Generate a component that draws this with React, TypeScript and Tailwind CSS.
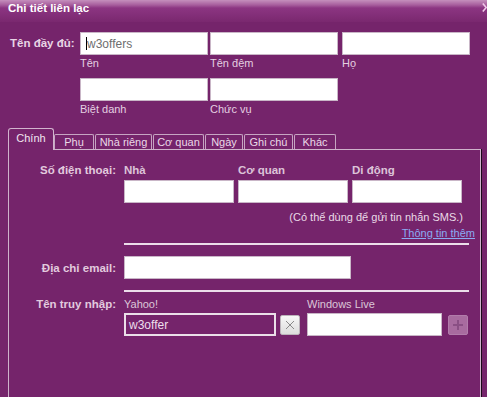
const field = 'h-[23px] bg-white border border-[#c9b6c7]';

function NameField({ label, value, className = '' }: { label: string; value?: string; className?: string }) {
  return (
    <div className={`w-[128px] ${className}`}>
      <div className={`${field} flex items-center pl-[5px]`}>
        {value && (
          <>
            <span className="w-px h-[13px] bg-black" />
            <span className="text-[#6e6e6e] text-[12px]">{value}</span>
          </>
        )}
      </div>
      <div className="mt-[1px] leading-[15px] text-[#e4cfe1]">{label}</div>
    </div>
  );
}

function Tab({ label, width, active = false, first = false }: { label: string; width: string; active?: boolean; first?: boolean }) {
  if (active) {
    return (
      <div
        className={`${width} h-[22px] border border-b-0 border-[#d2b4ce] rounded-t-[3px] bg-[#75246b] pt-[2px] text-center text-[#f2e4f0]`}
      >
        {label}
      </div>
    );
  }
  return (
    <div
      className={`${width} ${first ? '' : 'ml-[1px]'} mb-[1px] h-[15px] border border-b-0 border-[#c6a5c2] rounded-t-[2px] text-center leading-[14px] text-[#ead8e7]`}
    >
      {label}
    </div>
  );
}

export default function App() {
  return (
    <div className="w-[487px] h-[397px] overflow-hidden flex flex-col bg-[#75246b] font-['Liberation_Sans',Arial,sans-serif] text-[11px] leading-[14px] text-[#e2cade]">
      {/* title bar */}
      <div className="h-[22px] shrink-0 flex items-start bg-[linear-gradient(to_bottom,#c58fbd_0px,#a75d9d_5px,#8c3582_8px,#7a286f_22px)]">
        <span className="pl-[8px] pt-[1px] font-bold text-[11.5px] text-white">Chi tiết liên lạc</span>
        <svg className="ml-auto mt-[3px]" width="5" height="9" viewBox="0 0 5 9">
          <path d="M0.8 0.5 L4.2 4.5 L0.8 8.5" stroke="#f0c6e8" strokeWidth="1.6" fill="none" />
        </svg>
      </div>

      {/* full name */}
      <div className="mt-[10px] flex pl-[10px] shrink-0">
        <div className="w-[70px] font-bold text-[11.5px] leading-[23px] text-[#e8d4e5]">Tên đầy đủ:</div>
        <div className="flex flex-col gap-y-[7px]">
          <div className="flex">
            <NameField label="Tên" value="w3offers" />
            <NameField label="Tên đệm" className="ml-[2px]" />
            <NameField label="Họ" className="ml-[4px]" />
          </div>
          <div className="flex">
            <NameField label="Biệt danh" />
            <NameField label="Chức vụ" className="ml-[2px]" />
          </div>
        </div>
      </div>

      {/* tabs */}
      <div className="mt-[11px] -mb-px h-[22px] flex items-end pl-[8px] relative z-10 shrink-0">
        <Tab label="Chính" width="w-[46px]" active />
        <Tab label="Phụ" width="w-[40px]" first />
        <Tab label="Nhà riêng" width="w-[57px]" />
        <Tab label="Cơ quan" width="w-[51px]" />
        <Tab label="Ngày" width="w-[38px]" />
        <Tab label="Ghi chú" width="w-[49px]" />
        <Tab label="Khác" width="w-[42px]" />
      </div>

      {/* panel */}
      <div className="flex-1 ml-[8px] w-[473px] border-l border-t border-r border-[#cfb2cb] shadow-[1px_0_0_#1c0819]">
        <div className="flex pt-[13px]">
          <div className="w-[107px] text-right font-bold text-[11.5px]">Số điện thoại:</div>
          <div className="ml-[8px] w-[351px]">
            <div className="flex font-bold text-[11.5px] text-[#dcc3d8]">
              <span className="w-[114px]">Nhà</span>
              <span className="w-[114px]">Cơ quan</span>
              <span>Di động</span>
            </div>
            <div className="mt-[3px] flex gap-[4px]">
              <div className={`${field} w-[110px]`} />
              <div className={`${field} w-[110px]`} />
              <div className={`${field} w-[110px]`} />
            </div>
            <div className="mt-[7px] pr-[12px] text-right text-[#eadae7]">(Có thể dùng để gửi tin nhắn SMS.)</div>
            <div className="mt-[2px] text-right">
              <a className="underline text-[#8aabf2]">Thông tin thêm</a>
            </div>
            <div className="mt-[3px] h-[2px] w-[345px] bg-[#ecdeea]" />
          </div>
        </div>

        <div className="mt-[11px] flex items-center">
          <div className="w-[107px] text-right font-bold text-[11.5px]">Địa chỉ email:</div>
          <div className={`${field} ml-[8px] w-[227px]`} />
        </div>
        <div className="ml-[115px] mt-[11px] h-[2px] w-[345px] bg-[#ecdeea]" />

        <div className="mt-[5px] flex">
          <div className="w-[107px] text-right font-bold text-[11.5px]">Tên truy nhập:</div>
          <div className="ml-[8px]">
            <div className="flex text-[#dcc6d8]">
              <span className="w-[183px]">Yahoo!</span>
              <span>Windows Live</span>
            </div>
            <div className="mt-[2px] flex items-center">
              <div className="w-[152px] h-[23px] border-2 border-[#ebdfe9] flex items-center pl-[3px] text-[12px] text-[#eddfeb]">
                w3offer
              </div>
              <button className="ml-[4px] w-[20px] h-[20px] rounded-[2px] border border-[#bcb4bb] bg-[linear-gradient(to_bottom,#f7f7f7,#dcdcdc)] flex items-center justify-center">
                <svg width="10" height="10" viewBox="0 0 10 10">
                  <path d="M1 1 L9 9 M9 1 L1 9" stroke="#8a8a8a" strokeWidth="1" />
                </svg>
              </button>
              <div className={`${field} ml-[7px] w-[135px]`} />
              <button className="ml-[6px] w-[20px] h-[20px] rounded-[2px] border border-[#b27cab] bg-[#a86b9f] flex items-center justify-center">
                <svg width="12" height="12" viewBox="0 0 12 12">
                  <path d="M6 1 V11 M1 6 H11" stroke="#8a4f84" strokeWidth="2" />
                </svg>
              </button>
            </div>
          </div>
        </div>
      </div>
    </div>
  );
}
